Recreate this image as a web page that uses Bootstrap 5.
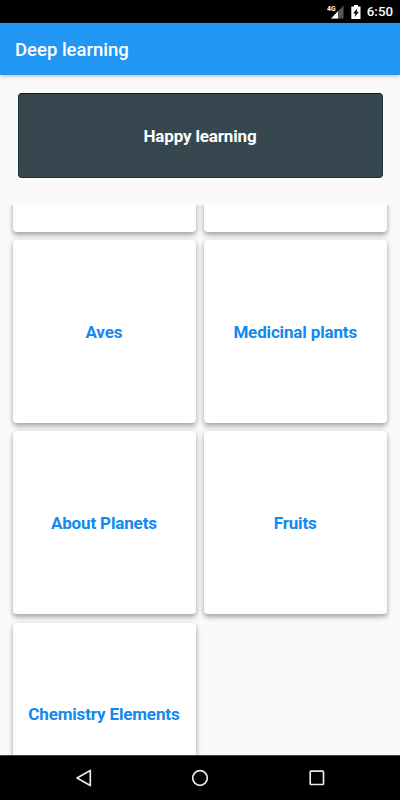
<!DOCTYPE html>
<html lang="en">
<head>
<meta charset="utf-8">
<meta name="viewport" content="width=device-width, initial-scale=1">
<title>Deep learning</title>
<link href="https://cdn.jsdelivr.net/npm/bootstrap@5.3.0/dist/css/bootstrap.min.css" rel="stylesheet">
<style>
html, body { height: 100%; }
body { font-family: Roboto, sans-serif; background: #fafafa; }
.screen { height: 100vh; }
.status-bar { height: 23px; background: #000; padding-right: 7px; font-size: 13.3px; line-height: 1; }
.clock { margin: 1px 0 0 6px; font-weight: 500; }
.app-bar { height: 52px; padding: 2px 0 0 15px; background: #2196f3; box-shadow: 0 1px 4px rgba(0,0,0,.28); z-index: 2; }
.app-title { font-size: 18.5px; font-weight: 500; line-height: 22px; color: #fff; }
.banner { height: 85px; margin: 18px 17.5px 27px; background: #37474f; border: 1px solid #1c323d; border-top-color: #07152a; border-radius: 4px; color: #fff; font-size: 17px; letter-spacing: -.15px; padding-top: 2px; }
.topics { margin: 0 9px; }
.topic-grid { display: grid; grid-template-columns: 183px 183px; grid-auto-rows: 183px; gap: 8.3px; margin: -156.2px 0 0 3.9px; }
.topic { border: 0; border-radius: 4px; background: #fff; box-shadow: 0 3px 5px rgba(0,0,0,.3), 0 1px 7px rgba(0,0,0,.1); color: #1089f0; font-size: 17px; line-height: 20px; letter-spacing: -.15px; padding-right: 1px; }
.nav-keys { height: 45px; background: #000; border-top: 1px solid #404040; }
</style>
</head>
<body>
<div class="screen d-flex flex-column overflow-hidden">
  <div class="status-bar d-flex align-items-center justify-content-end text-white flex-shrink-0">
    <svg width="17" height="14" viewBox="0 0 17 14">
      <path d="M16.5 .5V13.5H4Z" fill="#555"/>
      <path d="M11 6.2V13.5H4Z" fill="#fff"/>
      <text x="0" y="6.4" font-size="8" font-weight="700" fill="#fff" textLength="8.5" lengthAdjust="spacingAndGlyphs">4G</text>
    </svg>
    <svg width="10" height="14" viewBox="0 0 10 14" style="margin-left:7px">
      <path d="M3 0h4v1.5h2.5V14H.3V1.5H3z" fill="#fff"/>
      <path d="M6.2 3.3 2.2 8.4h2.2L3.7 12l4.2-5.2H5.6z" fill="#000"/>
    </svg>
    <span class="clock">6:50</span>
  </div>
  <nav class="app-bar navbar flex-shrink-0"><span class="app-title">Deep learning</span></nav>
  <div class="banner d-flex align-items-center justify-content-center fw-bold flex-shrink-0">Happy learning</div>
  <main class="topics flex-fill overflow-hidden">
    <div class="topic-grid">
      <div class="topic card"></div>
      <div class="topic card"></div>
      <div class="topic card align-items-center justify-content-center fw-bold">Aves</div>
      <div class="topic card align-items-center justify-content-center fw-bold">Medicinal plants</div>
      <div class="topic card align-items-center justify-content-center fw-bold">About Planets</div>
      <div class="topic card align-items-center justify-content-center fw-bold">Fruits</div>
      <div class="topic card align-items-center justify-content-center fw-bold">Chemistry Elements</div>
    </div>
  </main>
  <div class="nav-keys d-flex align-items-center justify-content-center flex-shrink-0">
    <svg width="260" height="20" viewBox="0 0 260 20" fill="none" stroke="#e8e8e8" stroke-width="1.7">
      <path d="M20.3 2.4V17.6L7 10Z" stroke-linejoin="round"/>
      <circle cx="130" cy="10" r="7.3"/>
      <rect x="240.2" y="3.2" width="13.3" height="13.3" rx=".7"/>
    </svg>
  </div>
</div>
<script src="https://cdn.jsdelivr.net/npm/bootstrap@5.3.0/dist/js/bootstrap.bundle.min.js"></script>
</body>
</html>
